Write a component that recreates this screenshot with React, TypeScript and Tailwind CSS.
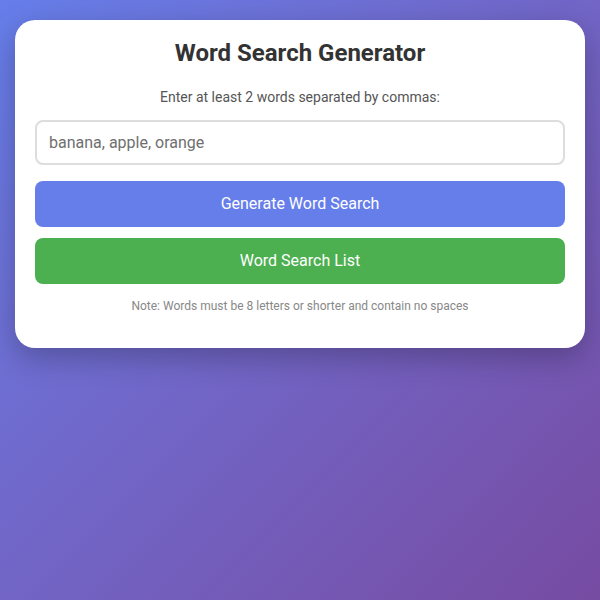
export default function App() {
  return (
    <div
      className="min-h-screen bg-linear-135 from-[#667eea] to-[#764ba2] px-[15px] pt-5"
      style={{ fontFamily: 'Roboto, "Liberation Sans", sans-serif' }}
    >
      {/* Card */}
      <div className="rounded-[20px] bg-white px-5 pb-[35px] pt-[18px] shadow-[0_10px_30px_rgba(0,0,0,0.25)]">
        <h1 className="text-center text-[24px] font-bold leading-[30px] text-[#333]">
          Word Search Generator
        </h1>
        <p className="mt-[21px] text-center text-[14px] leading-[16px] text-[#555]">
          Enter at least 2 words separated by commas:
        </p>

        <input
          type="text"
          placeholder="banana, apple, orange"
          className="mt-[15px] block h-[45px] w-full rounded-[8px] border-2 border-[#ddd] px-3 text-[16px] text-[#333] outline-none placeholder:text-[#6f6f6f]"
        />

        <button className="mt-[16px] block h-[46px] w-full rounded-[8px] bg-[#667eea] text-[16px] text-white">
          Generate Word Search
        </button>
        <button className="mt-[11px] block h-[46px] w-full rounded-[8px] bg-[#4caf50] text-[16px] text-white">
          Word Search List
        </button>

        <p className="mt-[15px] text-center text-[12px] leading-[14px] text-[#888]">
          Note: Words must be 8 letters or shorter and contain no spaces
        </p>
      </div>
    </div>
  )
}
